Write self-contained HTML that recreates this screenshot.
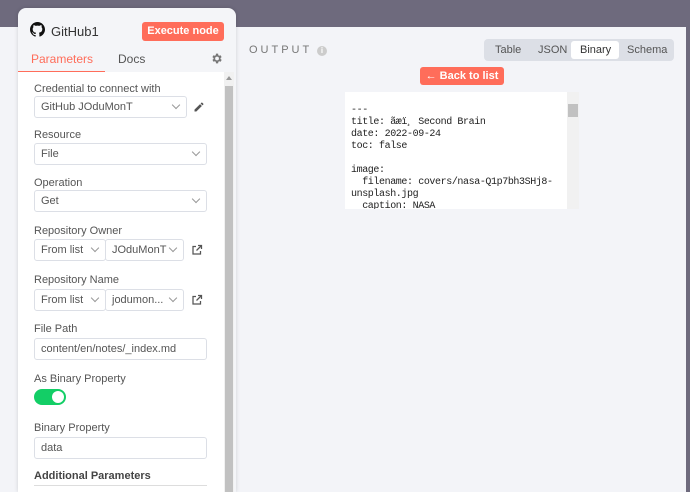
<!DOCTYPE html><html><head><style>
html,body{margin:0;width:690px;height:492px;overflow:hidden}
body{background:#f3f4f8;font-family:"Liberation Sans",sans-serif;position:relative}
.top{position:absolute;left:0;top:0;width:690px;height:27px;background:#6e6a7d}
.rstrip{position:absolute;left:686px;top:0;width:4px;height:492px;background:#6e6a7d}
.out{position:absolute;left:200px;top:27px;width:486px;height:465px;background:#f3f4f8;border-radius:0 8px 0 0}
.panel{position:absolute;left:18px;top:8px;width:218px;height:484px;background:#f4f5f8;border-radius:8px 8px 0 0;box-shadow:0 0 4px rgba(0,0,0,.15);overflow:hidden}
.content{position:absolute;left:0;top:64px;width:206px;height:440px;background:#fff}
.sb{position:absolute;left:206px;top:64px;width:10px;height:440px;background:#f1f1f1}
.sbt{position:absolute;left:207px;top:78px;width:8px;height:420px;background:#c1c1c1}
.t{position:absolute;font-size:11px;color:#555;white-space:nowrap}
.inp{position:absolute;height:22px;border:1px solid #dcdfe6;border-radius:3px;background:#fff;font-size:11px;color:#555;line-height:20px;padding-left:6px;box-sizing:border-box;white-space:nowrap}
.chev{position:absolute;right:7px;top:5px;width:5px;height:5px;border-right:1px solid #999;border-bottom:1px solid #999;transform:rotate(45deg)}
.mono{font-family:"Liberation Mono",monospace;font-size:10px;letter-spacing:-0.4px;line-height:12px;color:#222;white-space:pre}
</style></head><body>
<div class="top"></div><div class="rstrip"></div>
<div class="out">
<div class="t" style="left:49px;top:17px;letter-spacing:3px;color:#777;font-size:11px">OUTPUT</div>
<div style="position:absolute;left:117px;top:19px;width:10px;height:10px;border-radius:50%;background:#ccc;color:#fff;font-size:8px;text-align:center;line-height:10px;font-weight:bold">i</div>
<div style="position:absolute;left:284px;top:12px;width:190px;height:22px;background:#dcdfe6;border-radius:4px"></div>
<div class="t" style="left:295px;top:17px">Table</div>
<div class="t" style="left:338px;top:17px">JSON</div>
<div style="position:absolute;left:371px;top:14px;width:48px;height:18px;background:#fff;border-radius:3px"></div>
<div class="t" style="left:380px;top:17px;color:#333">Binary</div>
<div class="t" style="left:427px;top:17px">Schema</div>
<div style="position:absolute;left:220px;top:40px;width:84px;height:18px;background:#ff6d5a;border-radius:3px;color:#fff;font-size:11px;font-weight:bold;line-height:18px;text-align:center">&#8592; Back to list</div>
<div style="position:absolute;left:145px;top:65px;width:234px;height:117px;background:#fff;overflow:hidden"><div class="mono" style="position:absolute;left:6px;top:13px">---
title: ãæï¸ Second Brain
date: 2022-09-24
toc: false

image:
  filename: covers/nasa-Q1p7bh3SHj8-
unsplash.jpg
  caption: NASA</div>
<div style="position:absolute;right:0;top:0;width:12px;height:117px;background:#f1f1f1"></div>
<div style="position:absolute;right:1px;top:12px;width:10px;height:13px;background:#c1c1c1"></div></div>
</div>
<div class="panel">
<svg style="position:absolute;left:12px;top:14px" width="15" height="15" viewBox="0 0 16 16"><path fill="#111" d="M8 0C3.6 0 0 3.6 0 8c0 3.5 2.3 6.5 5.5 7.6.4.1.5-.2.5-.4v-1.4c-2.2.5-2.7-1-2.7-1-.4-.9-.9-1.2-.9-1.2-.7-.5.1-.5.1-.5.8.1 1.2.8 1.2.8.7 1.2 1.9.9 2.300.7.1-.5.3-.9.5-1.1-1.8-.2-3.6-.9-3.6-4 0-.9.3-1.6.8-2.1-.1-.2-.4-1 .1-2.1 0 0 .7-.2 2.2.8.6-.2 1.3-.3 2-.3s1.4.1 2 .3c1.5-1 2.2-.8 2.2-.8.4 1.1.2 1.9.1 2.1.5.6.8 1.3.8 2.1 0 3.1-1.9 3.7-3.6 3.9.3.3.5.8.5 1.500v2.2c0 .2.1.5.6.4C13.7 14.5 16 11.5 16 8c0-4.4-3.6-8-8-8z"/></svg>
<div class="t" style="left:33px;top:16px;font-size:13px;color:#333">GitHub1</div>
<div style="position:absolute;left:124px;top:14px;width:82px;height:19px;background:#ff6d5a;border-radius:3px;color:#fff;font-size:11px;font-weight:bold;line-height:19px;text-align:center">Execute node</div>
<div class="t" style="left:13px;top:44px;font-size:12px;color:#ff6d5a">Parameters</div>
<div class="t" style="left:100px;top:44px;font-size:12px;color:#555">Docs</div>
<div style="position:absolute;left:0;top:63px;width:87px;height:2px;background:#ff6d5a"></div>
<svg style="position:absolute;left:192px;top:44px" width="13" height="13" viewBox="0 0 24 24"><path fill="#777" d="M19.4 13a7.5 7.5 0 0 0 0-2l2.1-1.6-2-3.5-2.5 1a7.6 7.6 0 0 0-1.7-1L15 3h-4l-.4 2.9a7.6 7.6 0 0 0-1.7 1l-2.5-1-2 3.5L6.6 11a7.5 7.5 0 0 0 0 2l-2.1 1.6 2 3.5 2.5-1c.5.4 1.1.7 1.7 1L11 21h4l.4-2.900c.6-.3 1.200-.6 1.700-1l2.5 1 2-3.5zM13 15.5a3.5 3.5 0 1 1 0-7 3.5 3.5 0 0 1 0 7z"/></svg>
<div class="content"></div><div class="sb"></div><div class="sbt"></div>
<div style="position:absolute;left:208px;top:68px;border:3px solid transparent;border-bottom:4px solid #999;border-top:0"></div>
<div class="t" style="left:16px;top:75px">Credential to connect with</div>
<div class="inp" style="left:16px;top:88px;width:153px">GitHub JOduMonT<i class="chev"></i></div>
<svg style="position:absolute;left:175px;top:93px" width="12" height="12" viewBox="0 0 24 24"><path fill="#555" d="M3 17.3V21h3.7L17.8 9.9l-3.7-3.7zM20.7 7a1 1 0 0 0 0-1.4l-2.300-2.300a1 1 0 0 0-1.4 0l-1.800 1.800 3.700 3.700z"/></svg>
<div class="t" style="left:16px;top:121px">Resource</div>
<div class="inp" style="left:16px;top:135px;width:173px">File<i class="chev"></i></div>
<div class="t" style="left:16px;top:169px">Operation</div>
<div class="inp" style="left:16px;top:182px;width:173px">Get<i class="chev"></i></div>
<div class="t" style="left:16px;top:217px">Repository Owner</div>
<div class="inp" style="left:16px;top:231px;width:72px">From list<i class="chev"></i></div>
<div class="inp" style="left:87px;top:231px;width:79px">JOduMonT<i class="chev"></i></div>
<svg style="position:absolute;left:173px;top:236px" width="12" height="12" viewBox="0 0 24 24"><path fill="none" stroke="#555" stroke-width="2.5" d="M19 14v6H4V5h6M14 3h7v7M21 3l-10 10"/></svg>
<div class="t" style="left:16px;top:266px">Repository Name</div>
<div class="inp" style="left:16px;top:281px;width:72px">From list<i class="chev"></i></div>
<div class="inp" style="left:87px;top:281px;width:79px">jodumon...<i class="chev"></i></div>
<svg style="position:absolute;left:173px;top:286px" width="12" height="12" viewBox="0 0 24 24"><path fill="none" stroke="#555" stroke-width="2.5" d="M19 14v6H4V5h6M14 3h7v7M21 3l-10 10"/></svg>
<div class="t" style="left:16px;top:315px">File Path</div>
<div class="inp" style="left:16px;top:330px;width:173px">content/en/notes/_index.md</div>
<div class="t" style="left:16px;top:365px">As Binary Property</div>
<div style="position:absolute;left:16px;top:381px;width:32px;height:16px;border-radius:8px;background:#13ce66"></div>
<div style="position:absolute;left:34px;top:383px;width:12px;height:12px;border-radius:50%;background:#fff"></div>
<div class="t" style="left:16px;top:414px">Binary Property</div>
<div class="inp" style="left:16px;top:429px;width:173px">data</div>
<div class="t" style="left:16px;top:462px;font-weight:bold;color:#444">Additional Parameters</div>
<div style="position:absolute;left:16px;top:477px;width:173px;height:1px;background:#ddd"></div>
</div>
</body></html>
